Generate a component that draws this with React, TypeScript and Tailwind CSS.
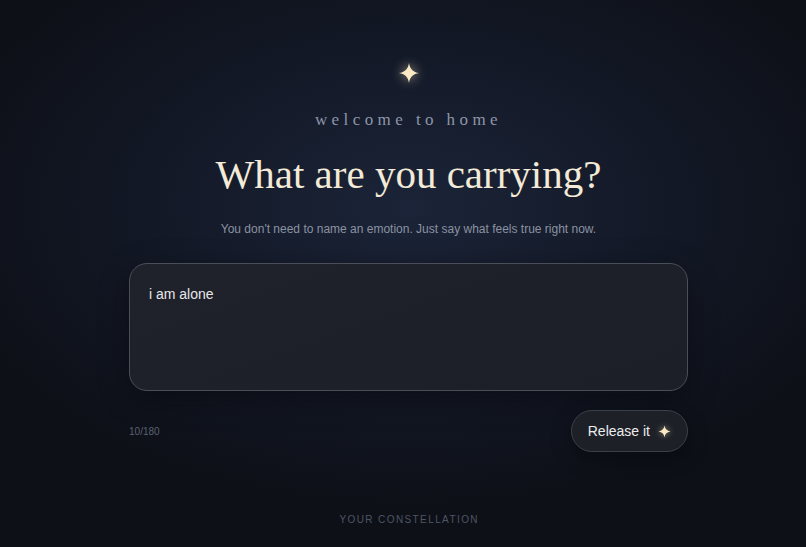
import { useState } from 'react';

function Sparkle({ size = 20, className = '' }: { size?: number; className?: string }) {
  return (
    <svg width={size} height={size} viewBox="0 0 24 24" className={className}>
      <path
        d="M12 1 C12.9 7.5 16.5 11.1 23 12 C16.5 12.9 12.9 16.5 12 23 C11.1 16.5 7.5 12.9 1 12 C7.5 11.1 11.1 7.5 12 1 Z"
        fill="#fbe9c4"
      />
    </svg>
  );
}

export default function App() {
  const [text, setText] = useState('i am alone');

  return (
    <div className="min-h-screen h-[547px] pl-[11px] flex flex-col items-center bg-[radial-gradient(ellipse_60%_55%_at_51%_38%,#1b2438_0%,#131826_55%,#0d1017_100%)] font-['Liberation_Sans',Arial,sans-serif]">
      <div className="mt-[62px] drop-shadow-[0_0_6px_rgba(251,233,196,0.7)]">
        <Sparkle size={22} />
      </div>

      <p className="mt-[24px] text-[17px] leading-[24px] tracking-[0.26em] text-[#8d95a8] font-['Liberation_Serif','Times_New_Roman',serif]">
        welcome to home
      </p>

      <h1 className="mt-[17px] text-[41px] leading-[50px] text-[#f3ead7] font-['Liberation_Serif','Times_New_Roman',serif]">
        What are you carrying?
      </h1>

      <p className="mt-[21px] text-[12px] leading-[18px] text-[#8b92a1]">
        You don&apos;t need to name an emotion. Just say what feels true right now.
      </p>

      <div className="mt-[25px] w-[559px]">
        <textarea
          value={text}
          onChange={(e) => setText(e.target.value.slice(0, 180))}
          autoFocus
          className="block w-full h-[128px] resize-none rounded-[18px] border border-[#4a4e58] bg-[linear-gradient(160deg,#1f222b_0%,#1c1f27_100%)] px-[19px] py-[20px] text-[14px] leading-[20px] text-[#e8e8ea] caret-[#e8e8ea] outline-none shadow-[0_8px_30px_rgba(0,0,0,0.35)]"
        />

        <div className="mt-[19px] flex items-center justify-between">
          <span className="text-[10px] text-[#5b6170]">{text.length}/180</span>
          <button
            type="button"
            className="flex items-center gap-[8px] h-[42px] px-[16px] rounded-full border border-[#3b3f49] bg-[#1d2027] text-[14px] text-[#ececee] shadow-[0_6px_20px_rgba(0,0,0,0.35)]"
          >
            Release it
            <Sparkle size={13} className="drop-shadow-[0_0_3px_rgba(251,233,196,0.6)]" />
          </button>
        </div>
      </div>

      <p className="mt-auto mb-[20px] text-[10px] tracking-[0.14em] text-[#4f5565] pl-[0.14em]">
        YOUR CONSTELLATION
      </p>
    </div>
  );
}
